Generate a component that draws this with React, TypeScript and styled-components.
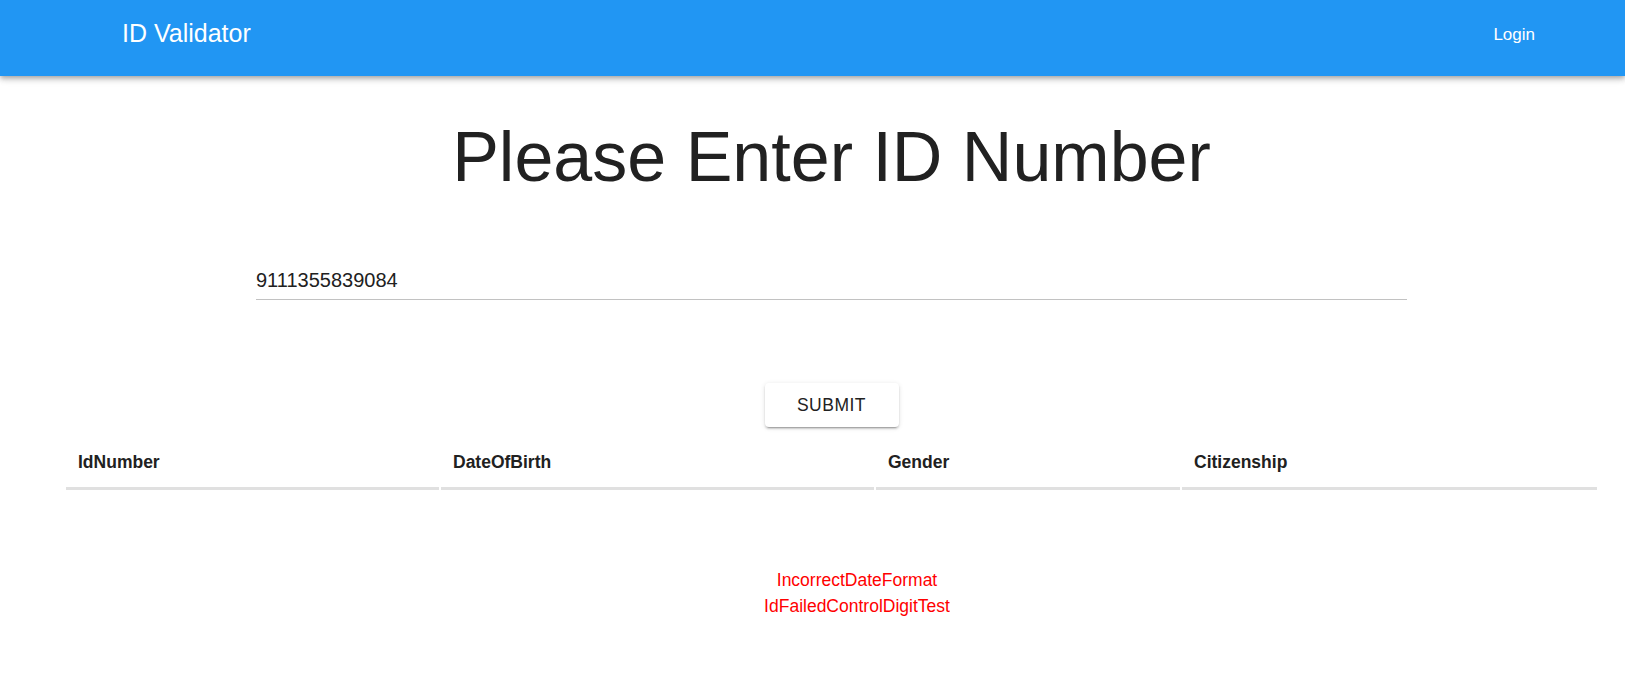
import React from "react";
import styled, { createGlobalStyle } from "styled-components";

const GlobalStyle = createGlobalStyle`
  html, body {
    margin: 0;
    padding: 0;
    background: #ffffff;
    font-family: "Liberation Sans", Arial, sans-serif;
    color: #212121;
  }
  * { box-sizing: border-box; }
`;

const Header = styled.header`
  height: 76px;
  background: #2196f3;
  box-shadow: 0 2px 4px -1px rgba(0,0,0,0.2), 0 4px 5px 0 rgba(0,0,0,0.14), 0 1px 10px 0 rgba(0,0,0,0.12);
  color: #ffffff;
`;

const Toolbar = styled.div`
  height: 67px;
  display: flex;
  align-items: center;
  justify-content: space-between;
  padding: 0 90px 0 122px;
`;

const Brand = styled.div`
  font-size: 25px;
  line-height: 29px;
  font-weight: 400;
`;

const LoginLink = styled.a`
  font-size: 17px;
  line-height: 20px;
  padding-top: 2px;
  color: #ffffff;
  text-decoration: none;
  cursor: pointer;
`;

const Main = styled.main`
  padding: 0 28px 0 66px;
  display: flex;
  flex-direction: column;
  align-items: center;
`;

const Title = styled.h1`
  margin: 41px 0 0;
  font-size: 70px;
  line-height: 80px;
  font-weight: 400;
  color: #212121;
  text-align: center;
`;

const Field = styled.div`
  width: 1151px;
  margin-top: 72px;
  border-bottom: 1px solid #c2c2c2;
  padding-bottom: 7px;
`;

const Input = styled.input`
  display: block;
  width: 100%;
  border: none;
  outline: none;
  padding: 0;
  margin: 0;
  font-family: "Liberation Sans", Arial, sans-serif;
  font-size: 20px;
  line-height: 23px;
  height: 23px;
  color: #212121;
  background: transparent;
`;

const SubmitButton = styled.button`
  margin-top: 83px;
  width: 134px;
  height: 44px;
  border: none;
  border-radius: 4px;
  background: #ffffff;
  box-shadow: 0 3px 1px -2px rgba(0,0,0,0.2), 0 2px 2px 0 rgba(0,0,0,0.14), 0 1px 5px 0 rgba(0,0,0,0.12);
  font-family: "Liberation Sans", Arial, sans-serif;
  font-size: 17.5px;
  letter-spacing: 0.5px;
  color: #212121;
  text-transform: uppercase;
  cursor: pointer;
`;

const Table = styled.table`
  border-collapse: separate;
  border-spacing: 2px 0;
  margin: 0 -2px;
  width: calc(100% + 4px);
  table-layout: fixed;
`;

const HeadCell = styled.th<{ $w: number }>`
  width: ${(p) => p.$w}px;
  text-align: left;
  font-size: 17.5px;
  line-height: 24px;
  font-weight: 700;
  color: #212121;
  padding: 23px 12px 13px;
  border-bottom: 3px solid #e0e0e0;
`;

const Errors = styled.div`
  margin-top: 77px;
  padding-left: 51px;
  display: flex;
  flex-direction: column;
  align-items: center;
`;

const ErrorLine = styled.div`
  color: #ff0000;
  font-size: 17.5px;
  line-height: 26px;
`;

const columns = [
  { label: "IdNumber", w: 373 },
  { label: "DateOfBirth", w: 433 },
  { label: "Gender", w: 304 },
  { label: "Citizenship", w: 415 },
];

const errors = ["IncorrectDateFormat", "IdFailedControlDigitTest"];

export default function App() {
  return (
    <>
      <GlobalStyle />
      <Header>
        <Toolbar>
          <Brand>ID Validator</Brand>
          <LoginLink>Login</LoginLink>
        </Toolbar>
      </Header>
      <Main>
        <Title>Please Enter ID Number</Title>
        <Field>
          <Input defaultValue="9111355839084" />
        </Field>
        <SubmitButton>Submit</SubmitButton>
        <Table>
          <thead>
            <tr>
              {columns.map((c) => (
                <HeadCell key={c.label} $w={c.w}>
                  {c.label}
                </HeadCell>
              ))}
            </tr>
          </thead>
        </Table>
        <Errors>
          {errors.map((e) => (
            <ErrorLine key={e}>{e}</ErrorLine>
          ))}
        </Errors>
      </Main>
    </>
  );
}
